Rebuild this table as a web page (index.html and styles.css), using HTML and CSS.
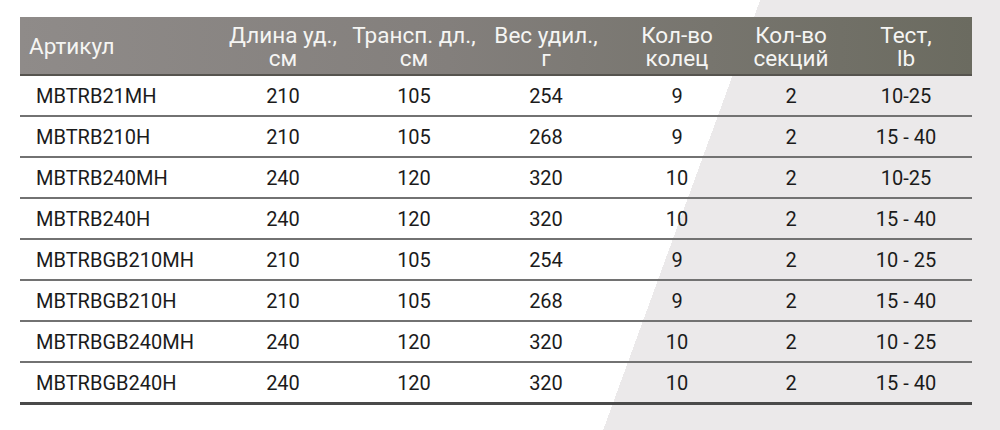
FILE: index.html
```html
<!DOCTYPE html>
<html lang="ru">
<head>
<meta charset="utf-8">
<link rel="stylesheet" href="styles.css">
</head>
<body>
<div class="page">
  <table class="specs">
    <colgroup>
      <col class="c1"><col class="c2"><col class="c3"><col class="c4"><col class="c5"><col class="c6"><col class="c7">
    </colgroup>
    <thead>
      <tr>
        <th class="first">Артикул</th>
        <th>Длина уд.,<br>см</th>
        <th>Трансп. дл.,<br>см</th>
        <th>Вес удил.,<br>г</th>
        <th>Кол-во<br>колец</th>
        <th>Кол-во<br>секций</th>
        <th>Тест,<br>lb</th>
      </tr>
    </thead>
    <tbody>
      <tr><td class="first">MBTRB21MH</td><td>210</td><td>105</td><td>254</td><td>9</td><td>2</td><td>10-25</td></tr>
      <tr><td class="first">MBTRB210H</td><td>210</td><td>105</td><td>268</td><td>9</td><td>2</td><td>15 - 40</td></tr>
      <tr><td class="first">MBTRB240MH</td><td>240</td><td>120</td><td>320</td><td>10</td><td>2</td><td>10-25</td></tr>
      <tr><td class="first">MBTRB240H</td><td>240</td><td>120</td><td>320</td><td>10</td><td>2</td><td>15 - 40</td></tr>
      <tr><td class="first">MBTRBGB210MH</td><td>210</td><td>105</td><td>254</td><td>9</td><td>2</td><td>10 - 25</td></tr>
      <tr><td class="first">MBTRBGB210H</td><td>210</td><td>105</td><td>268</td><td>9</td><td>2</td><td>15 - 40</td></tr>
      <tr><td class="first">MBTRBGB240MH</td><td>240</td><td>120</td><td>320</td><td>10</td><td>2</td><td>10 - 25</td></tr>
      <tr class="last"><td class="first">MBTRBGB240H</td><td>240</td><td>120</td><td>320</td><td>10</td><td>2</td><td>15 - 40</td></tr>
    </tbody>
  </table>
</div>
</body>
</html>
```
FILE: styles.css
```css
html, body {
  margin: 0;
  padding: 0;
}

.page {
  width: 1000px;
  height: 430px;
  box-sizing: border-box;
  padding: 17px 0 0 20px;
  background: linear-gradient(110.06deg, #ffffff 65.7%, #ebe9ea 65.7%);
  font-family: Roboto, "Liberation Sans", sans-serif;
  overflow: hidden;
}

.specs {
  width: 952px;
  border-collapse: collapse;
  table-layout: fixed;
}

.c1 { width: 198px; }
.c2 { width: 130px; }
.c3 { width: 132px; }
.c4 { width: 132px; }
.c5 { width: 130px; }
.c6 { width: 98px; }
.c7 { width: 132px; }

.specs thead tr {
  background: linear-gradient(to right, #8f8b89 0%, #837f7c 45%, #6b6b60 100%);
}

.specs th {
  height: 58px;
  box-sizing: border-box;
  padding: 2px 0 0;
  color: #f5f5f3;
  font-weight: 400;
  font-size: 22.5px;
  line-height: 23px;
  text-align: center;
  vertical-align: middle;
  border-bottom: 2px solid #56544f;
}

.specs th.first {
  text-align: left;
  padding-left: 9px;
}

.specs td {
  height: 41px;
  box-sizing: border-box;
  padding: 1px 0 0;
  color: #1b1b1b;
  font-size: 20px;
  line-height: 22px;
  text-align: center;
  vertical-align: middle;
  border-bottom: 2px solid #727272;
}

.specs td.first {
  text-align: left;
  padding-left: 16px;
}

.specs tr.last td {
  border-bottom: 3px solid #4a4a4a;
}
```
